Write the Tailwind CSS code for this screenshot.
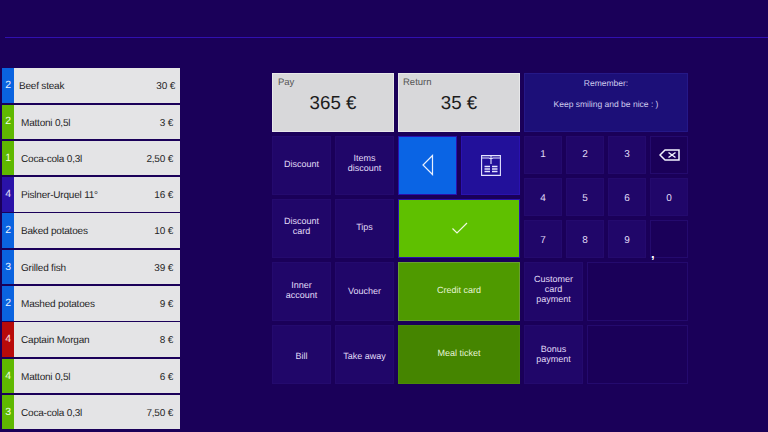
<!DOCTYPE html>
<html lang="en">
<head>
  <meta charset="UTF-8" />
  <title>POS payment</title>
  <script src="https://cdn.jsdelivr.net/npm/@tailwindcss/browser@4"></script>
</head>
<body class="bg-[#1a0059] w-[768px] h-[432px] overflow-hidden font-['Liberation_Sans',sans-serif] [text-rendering:geometricPrecision]">
  <!-- Top line -->
  <div class="h-[38px] ml-[5px] border-b border-[#3010b0]"></div>

  <div class="flex pt-[30.3px]">
    <!-- Order items -->
    <div class="ml-[2px] w-[178px] flex flex-col gap-[1.8px] shrink-0">
      <div class="h-[34.5px] flex bg-[#e4e4e6] text-[#262626] text-[10px] tracking-[-0.2px]"><span class="w-[12px] bg-[#0a63e0] text-[#f0f4ff] text-[10.5px] flex items-center justify-center pt-[1px]">2</span><span class="flex-1 flex items-center justify-between pl-[5px] pr-[5px] pt-[2px]"><span>Beef steak</span><span>30 €</span></span></div>
      <div class="h-[34.5px] flex bg-[#e4e4e6] text-[#262626] text-[10px] tracking-[-0.2px]"><span class="w-[12px] bg-[#5fb800] text-[#f0ffe0] text-[10.5px] flex items-center justify-center pt-[1px]">2</span><span class="flex-1 flex items-center justify-between pl-[7px] pr-[7px] pt-[3px]"><span>Mattoni 0,5l</span><span>3 €</span></span></div>
      <div class="h-[34.5px] flex bg-[#e4e4e6] text-[#262626] text-[10px] tracking-[-0.2px]"><span class="w-[12px] bg-[#5fb800] text-[#f0ffe0] text-[10.5px] flex items-center justify-center pt-[1px]">1</span><span class="flex-1 flex items-center justify-between pl-[7px] pr-[7px] pt-[3px]"><span>Coca-cola 0,3l</span><span>2,50 €</span></span></div>
      <div class="h-[34.5px] flex bg-[#e4e4e6] text-[#262626] text-[10px] tracking-[-0.2px]"><span class="w-[12px] bg-[#2a12a8] text-[#e8e8ff] text-[10.5px] flex items-center justify-center pt-[1px]">4</span><span class="flex-1 flex items-center justify-between pl-[7px] pr-[7px] pt-[3px]"><span>Pislner-Urquel 11°</span><span>16 €</span></span></div>
      <div class="h-[34.5px] flex bg-[#e4e4e6] text-[#262626] text-[10px] tracking-[-0.2px]"><span class="w-[12px] bg-[#0a63e0] text-[#f0f4ff] text-[10.5px] flex items-center justify-center pt-[1px]">2</span><span class="flex-1 flex items-center justify-between pl-[7px] pr-[7px] pt-[2px]"><span>Baked potatoes</span><span>10 €</span></span></div>
      <div class="h-[34.5px] flex bg-[#e4e4e6] text-[#262626] text-[10px] tracking-[-0.2px]"><span class="w-[12px] bg-[#0a63e0] text-[#f0f4ff] text-[10.5px] flex items-center justify-center pt-[1px]">3</span><span class="flex-1 flex items-center justify-between pl-[7px] pr-[7px] pt-[3px]"><span>Grilled fish</span><span>39 €</span></span></div>
      <div class="h-[34.5px] flex bg-[#e4e4e6] text-[#262626] text-[10px] tracking-[-0.2px]"><span class="w-[12px] bg-[#0a63e0] text-[#f0f4ff] text-[10.5px] flex items-center justify-center pt-[1px]">2</span><span class="flex-1 flex items-center justify-between pl-[7px] pr-[7px] pt-[3px]"><span>Mashed potatoes</span><span>9 €</span></span></div>
      <div class="h-[34.5px] flex bg-[#e4e4e6] text-[#262626] text-[10px] tracking-[-0.2px]"><span class="w-[12px] bg-[#b80a0a] text-[#ffe8e8] text-[10.5px] flex items-center justify-center pt-[1px]">4</span><span class="flex-1 flex items-center justify-between pl-[7px] pr-[7px] pt-[2px]"><span>Captain Morgan</span><span>8 €</span></span></div>
      <div class="h-[34.5px] flex bg-[#e4e4e6] text-[#262626] text-[10px] tracking-[-0.2px]"><span class="w-[12px] bg-[#5fb800] text-[#f0ffe0] text-[10.5px] flex items-center justify-center pt-[1px]">4</span><span class="flex-1 flex items-center justify-between pl-[7px] pr-[7px] pt-[3px]"><span>Mattoni 0,5l</span><span>6 €</span></span></div>
      <div class="h-[34.5px] flex bg-[#e4e4e6] text-[#262626] text-[10px] tracking-[-0.2px]"><span class="w-[12px] bg-[#5fb800] text-[#f0ffe0] text-[10.5px] flex items-center justify-center pt-[1px]">3</span><span class="flex-1 flex items-center justify-between pl-[7px] pr-[7px] pt-[3px]"><span>Coca-cola 0,3l</span><span>7,50 €</span></span></div>
    </div>

    <!-- Payment panel -->
    <div class="ml-[92px] mt-[4.7px] grid grid-cols-[122px_122px_164px] grid-rows-[59px_59px_59px_59px_59px] gap-[4px] text-[9px] leading-[9.5px] text-[#e0dcf8] text-center">
      <div class="bg-[#d8d8da] border border-[#e8e8ea] text-[#1c1c1c] text-left px-[5px] pt-[3px]">
        <div class="text-[9.5px] leading-[11px] text-[#555]">Pay</div>
        <div class="text-[18.750px] leading-[22px] text-center mt-[4px]">365 €</div>
      </div>
      <div class="bg-[#d8d8da] border border-[#e8e8ea] text-[#1c1c1c] text-left px-[4px] pt-[3px]">
        <div class="text-[9.5px] leading-[11px] text-[#555]">Return</div>
        <div class="text-[18.750px] leading-[22px] text-center mt-[4px]">35 €</div>
      </div>
      <div class="bg-[#1c0f78] border border-[#251888] pt-[4px] text-[8.5px] text-[#cfcbee]">
        <div class="leading-[11px]">Remember:</div>
        <div class="mt-[10px] leading-[11px]">Keep smiling and be nice : )</div>
      </div>

      <!-- Left action buttons -->
      <div class="row-span-4 col-start-1 row-start-2 grid grid-cols-2 grid-rows-4 gap-[4px]">
        <div class="bg-[#200669] border border-[#240a6e] flex items-center justify-center pb-[1px]">Discount</div>
        <div class="bg-[#200669] border border-[#240a6e] flex items-center justify-center pb-[5px] leading-[10px]">Items<br />discount</div>
        <div class="bg-[#200669] border border-[#240a6e] flex items-center justify-center pb-[3px]">Discount<br />card</div>
        <div class="bg-[#200669] border border-[#240a6e] flex items-center justify-center pb-[1px]">Tips</div>
        <div class="bg-[#200669] border border-[#240a6e] flex items-center justify-center pb-[1px]">Inner<br />account</div>
        <div class="bg-[#200669] border border-[#240a6e] flex items-center justify-center pt-[1px]">Voucher</div>
        <div class="bg-[#200669] border border-[#240a6e] flex items-center justify-center pt-[5px]">Bill</div>
        <div class="bg-[#200669] border border-[#240a6e] flex items-center justify-center pt-[5px]">Take away</div>
      </div>

      <!-- Middle column -->
      <div class="row-span-4 col-start-2 row-start-2 grid grid-cols-2 grid-rows-4 gap-[4px]">
        <div class="bg-[#0a64e4] border-[1.5px] border-[#2a12b0] flex items-center justify-center">
          <svg width="14" height="22" viewBox="0 0 14 22" fill="none" stroke="#e8f0ff" stroke-width="1.2"><path d="M11.5 1.5 2 11l9.5 9.5z" /></svg>
        </div>
        <div class="bg-[#22109a] border border-[#2a12b0] flex items-center justify-center">
          <svg width="20" height="21" viewBox="0 0 20 21" fill="none" stroke="#e4e4ff" stroke-width="1.1"><path d="M.6.6h18.800v19.800H.6zM.6 3h7.400l2 1 2-1h7.400M10 1v8" /><path d="M3.500 11.500h5.500M3.500 14h5.500M3.500 16.500h5.500M11 11.500h5.500M11 14h5.500M11 16.500h5.500" stroke-width="1.300" /></svg>
        </div>
        <div class="col-span-2 bg-[#5fc000] border-[1.5px] border-[#2a12b0] flex items-center justify-center">
          <svg width="17" height="13" viewBox="0 0 17 13" fill="none" stroke="#eef8e0" stroke-width="1.2"><path d="M1.500 6.500 6 11l10-10" /></svg>
        </div>
        <div class="col-span-2 bg-[#4f9a00] border border-[#6aa030] text-[#e6f4d4] flex items-center justify-center pb-[2px]">Credit card</div>
        <div class="col-span-2 bg-[#458500] border border-[#4a8a08] text-[#e6f4d4] flex items-center justify-center pb-[1px]">Meal ticket</div>
      </div>

      <!-- Numpad and extra payments -->
      <div class="row-span-4 col-start-3 row-start-2 flex flex-col gap-[4px]">
        <div class="h-[122px] grid grid-cols-4 grid-rows-3 gap-[4px] text-[10px]">
          <div class="bg-[#200669] border border-[#240a6e] flex items-center justify-center">1</div>
          <div class="bg-[#200669] border border-[#240a6e] flex items-center justify-center">2</div>
          <div class="bg-[#200669] border border-[#240a6e] flex items-center justify-center">3</div>
          <div class="bg-[#1a0059] border border-[#240a6e] flex items-center justify-center">
            <svg width="21" height="12" viewBox="0 0 21 12" fill="none" stroke="#f4f4ff" stroke-width="1.500"><path d="M6 1h14v10H6L1 6z" /><path d="M9.500 3.500l7 5M16.500 3.500l-7 5" /></svg>
          </div>
          <div class="bg-[#200669] border border-[#240a6e] flex items-center justify-center pt-[3px]">4</div>
          <div class="bg-[#200669] border border-[#240a6e] flex items-center justify-center pt-[3px]">5</div>
          <div class="bg-[#200669] border border-[#240a6e] flex items-center justify-center pt-[3px]">6</div>
          <div class="bg-[#200669] border border-[#240a6e] flex items-center justify-center pt-[3px]">0</div>
          <div class="bg-[#200669] border border-[#240a6e] flex items-center justify-center pt-[3px]">7</div>
          <div class="bg-[#200669] border border-[#240a6e] flex items-center justify-center pt-[3px]">8</div>
          <div class="bg-[#200669] border border-[#240a6e] flex items-center justify-center pt-[3px]">9</div>
          <div class="relative bg-[#1a0059] border border-[#240a6e]"><span class="absolute left-0 bottom-[-2px] text-[13px] font-bold text-white">,</span></div>
        </div>
        <div class="h-[122px] grid grid-cols-[59px_101px] grid-rows-2 gap-[4px]">
          <div class="bg-[#200669] border border-[#240a6e] flex items-center justify-center pb-[5px] leading-[10px]">Customer<br />card<br />payment</div>
          <div class="bg-[#1a0059] border border-[#240a6e]"></div>
          <div class="bg-[#200669] border border-[#240a6e] flex items-center justify-center pb-[1px] leading-[10px]">Bonus<br />payment</div>
          <div class="bg-[#1a0059] border border-[#240a6e]"></div>
        </div>
      </div>
    </div>
  </div>
</body>
</html>
